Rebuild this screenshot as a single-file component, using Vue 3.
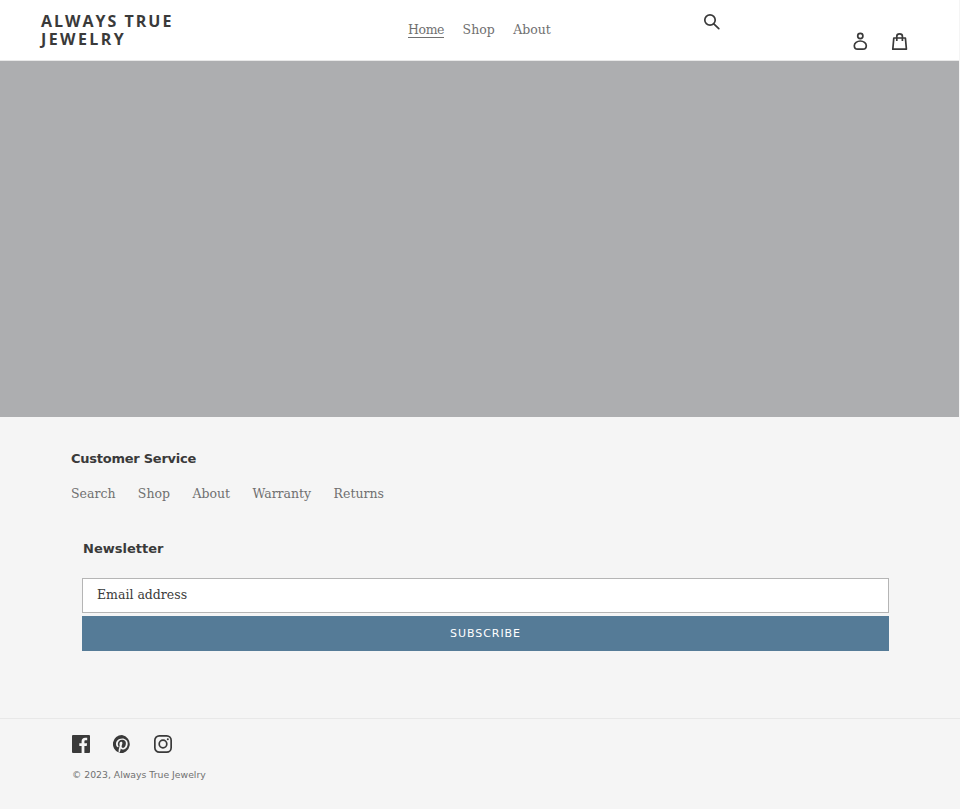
<template>
  <div class="page">
    <header class="site-header">
      <a class="logo" href="#">ALWAYS TRUE <span>JEWELRY</span></a>
      <nav class="main-nav">
        <a v-for="(item, i) in navLinks" :key="item" href="#" :class="{ active: i === 0 }">{{ item }}</a>
      </nav>
      <div class="icons">
        <a class="search-icon" href="#" aria-label="Search">
          <svg viewBox="0 0 20 20" width="20" height="20" fill="none" stroke="#3a3a3a" stroke-width="1.700">
            <circle cx="8" cy="8" r="5.200" />
            <path d="M11.800 11.800l5 4.900" stroke-linecap="round" />
          </svg>
        </a>
        <a class="account-icon" href="#" aria-label="Log in">
          <svg viewBox="0 0 20 20" width="20" height="20" fill="none" stroke="#3a3a3a" stroke-width="1.700">
            <circle cx="10.300" cy="5" r="2.600" />
            <path d="M10.300 10c-3.200 0-6 2.100-6 4.800 0 2 1.500 3.400 3.400 3.400h5.200c1.900 0 3.400-1.400 3.400-3.400 0-2.700-2.800-4.800-6-4.800z" />
          </svg>
        </a>
        <a class="cart-icon" href="#" aria-label="Cart">
          <svg viewBox="0 0 20 20" width="20" height="20" fill="none" stroke="#3a3a3a" stroke-width="1.700" stroke-linejoin="round">
            <path d="M3.800 7h11.600l1 11.200H2.800z" />
            <path d="M6.800 10V5.200c0-1.700 1.200-2.400 2.800-2.400s2.800.7 2.800 2.400V10" />
          </svg>
        </a>
      </div>
    </header>

    <section class="hero"></section>

    <footer class="site-footer">
      <div class="links-block">
        <h4>Customer Service</h4>
        <ul>
          <li v-for="item in footerLinks" :key="item"><a href="#">{{ item }}</a></li>
        </ul>
      </div>

      <div class="newsletter">
        <h4>Newsletter</h4>
        <form @submit.prevent>
          <input type="email" placeholder="Email address" />
          <button type="submit">SUBSCRIBE</button>
        </form>
      </div>

      <div class="footer-bottom">
        <div class="social">
          <a href="#" aria-label="Facebook">
            <svg viewBox="0 0 18 18" width="18" height="18">
              <path fill="#3a3a3a" d="M17 0H1a1 1 0 0 0-1 1v16a1 1 0 0 0 1 1h8.600v-7H7.300V8.300h2.300v-2c0-2.300 1.400-3.600 3.500-3.600 1 0 1.800.1 2.100.1v2.400h-1.400c-1.100 0-1.400.5-1.400 1.300v1.800h2.700L14.700 11h-2.300v7H17a1 1 0 0 0 1-1V1a1 1 0 0 0-1-1z" />
            </svg>
          </a>
          <a href="#" aria-label="Pinterest">
            <svg viewBox="0 0 18 18" width="18" height="18">
              <path fill="#3a3a3a" d="M9 0a9 9 0 0 0-3.300 17.400c-.1-.7-.1-1.800 0-2.600l1.100-4.500s-.3-.6-.3-1.300c0-1.300.8-2.200 1.700-2.200.8 0 1.200.6 1.200 1.300 0 .8-.5 2-.8 3.100-.2.900.5 1.700 1.400 1.700 1.700 0 2.900-2.200 2.900-4.700 0-1.900-1.300-3.400-3.700-3.400-2.700 0-4.400 2-4.400 4.300 0 .8.200 1.300.6 1.800.2.200.2.300.1.500l-.2.700c-.1.200-.2.300-.5.200-1.200-.5-1.800-1.800-1.800-3.300 0-2.500 2.100-5.400 6.200-5.400 3.300 0 5.500 2.400 5.500 5 0 3.400-1.900 6-4.700 6-1 0-1.800-.5-2.200-1.100l-.6 2.400c-.2.800-.7 1.700-1.100 2.300A9 9 0 1 0 9 0z" />
            </svg>
          </a>
          <a href="#" aria-label="Instagram">
            <svg viewBox="0 0 18 18" width="18" height="18" fill="none" stroke="#3a3a3a" stroke-width="1.700">
              <rect x=".85" y=".85" width="16.300" height="16.300" rx="4.400" />
              <circle cx="9" cy="9" r="3.800" />
              <circle cx="13.800" cy="4.200" r="1" fill="#3a3a3a" stroke="none" />
            </svg>
          </a>
        </div>
        <small class="copyright">© 2023, <a href="#">Always True Jewelry</a></small>
      </div>
    </footer>
  </div>
</template>

<script setup>
const navLinks = ['Home', 'Shop', 'About']
const footerLinks = ['Search', 'Shop', 'About', 'Warranty', 'Returns']
</script>

<style>
html, body {
  margin: 0;
  background: #f5f5f5;
}
</style>

<style scoped>
.page {
  width: 959px;
  min-height: 809px;
  color: #3a3a3a;
  font-family: "DejaVu Serif", serif;
}
a {
  color: inherit;
  text-decoration: none;
}

.site-header {
  box-sizing: border-box;
  height: 61px;
  background: #fff;
  border-bottom: 1px solid #e8e8e8;
  display: flex;
  position: relative;
  padding-left: 41px;
}
.logo {
  width: 160px;
  margin-top: 12px;
  font: bold 16px/18px "Open Sans", sans-serif;
  letter-spacing: 2px;
}
.logo span {
  letter-spacing: 2.400px;
}
.main-nav {
  display: flex;
  gap: 18.500px;
  margin-left: 207px;
  margin-top: 21px;
  font-size: 12.500px;
  line-height: 17px;
  color: #707070;
}
.main-nav .active {
  height: 16px;
  border-bottom: 1px solid #707070;
  letter-spacing: -0.400px;
}
.icons {
  display: flex;
  align-items: flex-start;
  position: absolute;
  left: 702px;
  top: 0;
}
.icons a {
  display: block;
  height: 20px;
}
.search-icon {
  margin-top: 12px;
}
.account-icon {
  margin-top: 31px;
  margin-left: 128px;
}
.cart-icon {
  margin-top: 31px;
  margin-left: 20px;
}

.hero {
  height: 356px;
  background: #adaeb0;
}

.site-footer {
  background: #f5f5f5;
  height: 392px;
  box-sizing: border-box;
  padding-top: 33px;
  width: 960px;
}
h4 {
  margin: 0;
  font: bold 13px/18px "DejaVu Sans", sans-serif;
}
.links-block {
  padding-left: 71px;
}
.links-block h4 {
  letter-spacing: -0.250px;
}
.links-block ul {
  list-style: none;
  margin: 17px 0 0;
  padding: 0;
  display: flex;
  gap: 22.400px;
  font-size: 12.500px;
  line-height: 17px;
  color: #707070;
}
.newsletter {
  padding: 38px 71px 0 83px;
}
.newsletter form {
  margin-top: 20px;
  margin-left: -1px;
  display: flex;
  flex-direction: column;
  gap: 3px;
}
.newsletter input {
  box-sizing: border-box;
  height: 35px;
  width: 100%;
  margin: 0;
  padding: 0 14px 2px;
  background: #fff;
  border: 1px solid #b5b5b5;
  border-radius: 0;
  font: 12.500px "DejaVu Serif", serif;
  color: #3a3a3a;
}
.newsletter input::placeholder {
  color: #3a3a3a;
  opacity: 1;
}
.newsletter button {
  height: 35px;
  border: 0;
  border-radius: 0;
  background: #557b97;
  color: #fff;
  font: 11px "DejaVu Sans", sans-serif;
  letter-spacing: 0.950px;
}
.footer-bottom {
  margin-top: 67px;
  border-top: 1px solid #e8e8e8;
  padding: 16px 71px 0;
}
.social {
  display: flex;
  gap: 23px;
  height: 18px;
  padding-left: 1px;
}
.social a {
  display: block;
  height: 18px;
}
.copyright {
  display: block;
  margin-top: 15px;
  padding-left: 1px;
  font: 9.300px/14px "DejaVu Sans", sans-serif;
  color: #707070;
}
</style>
